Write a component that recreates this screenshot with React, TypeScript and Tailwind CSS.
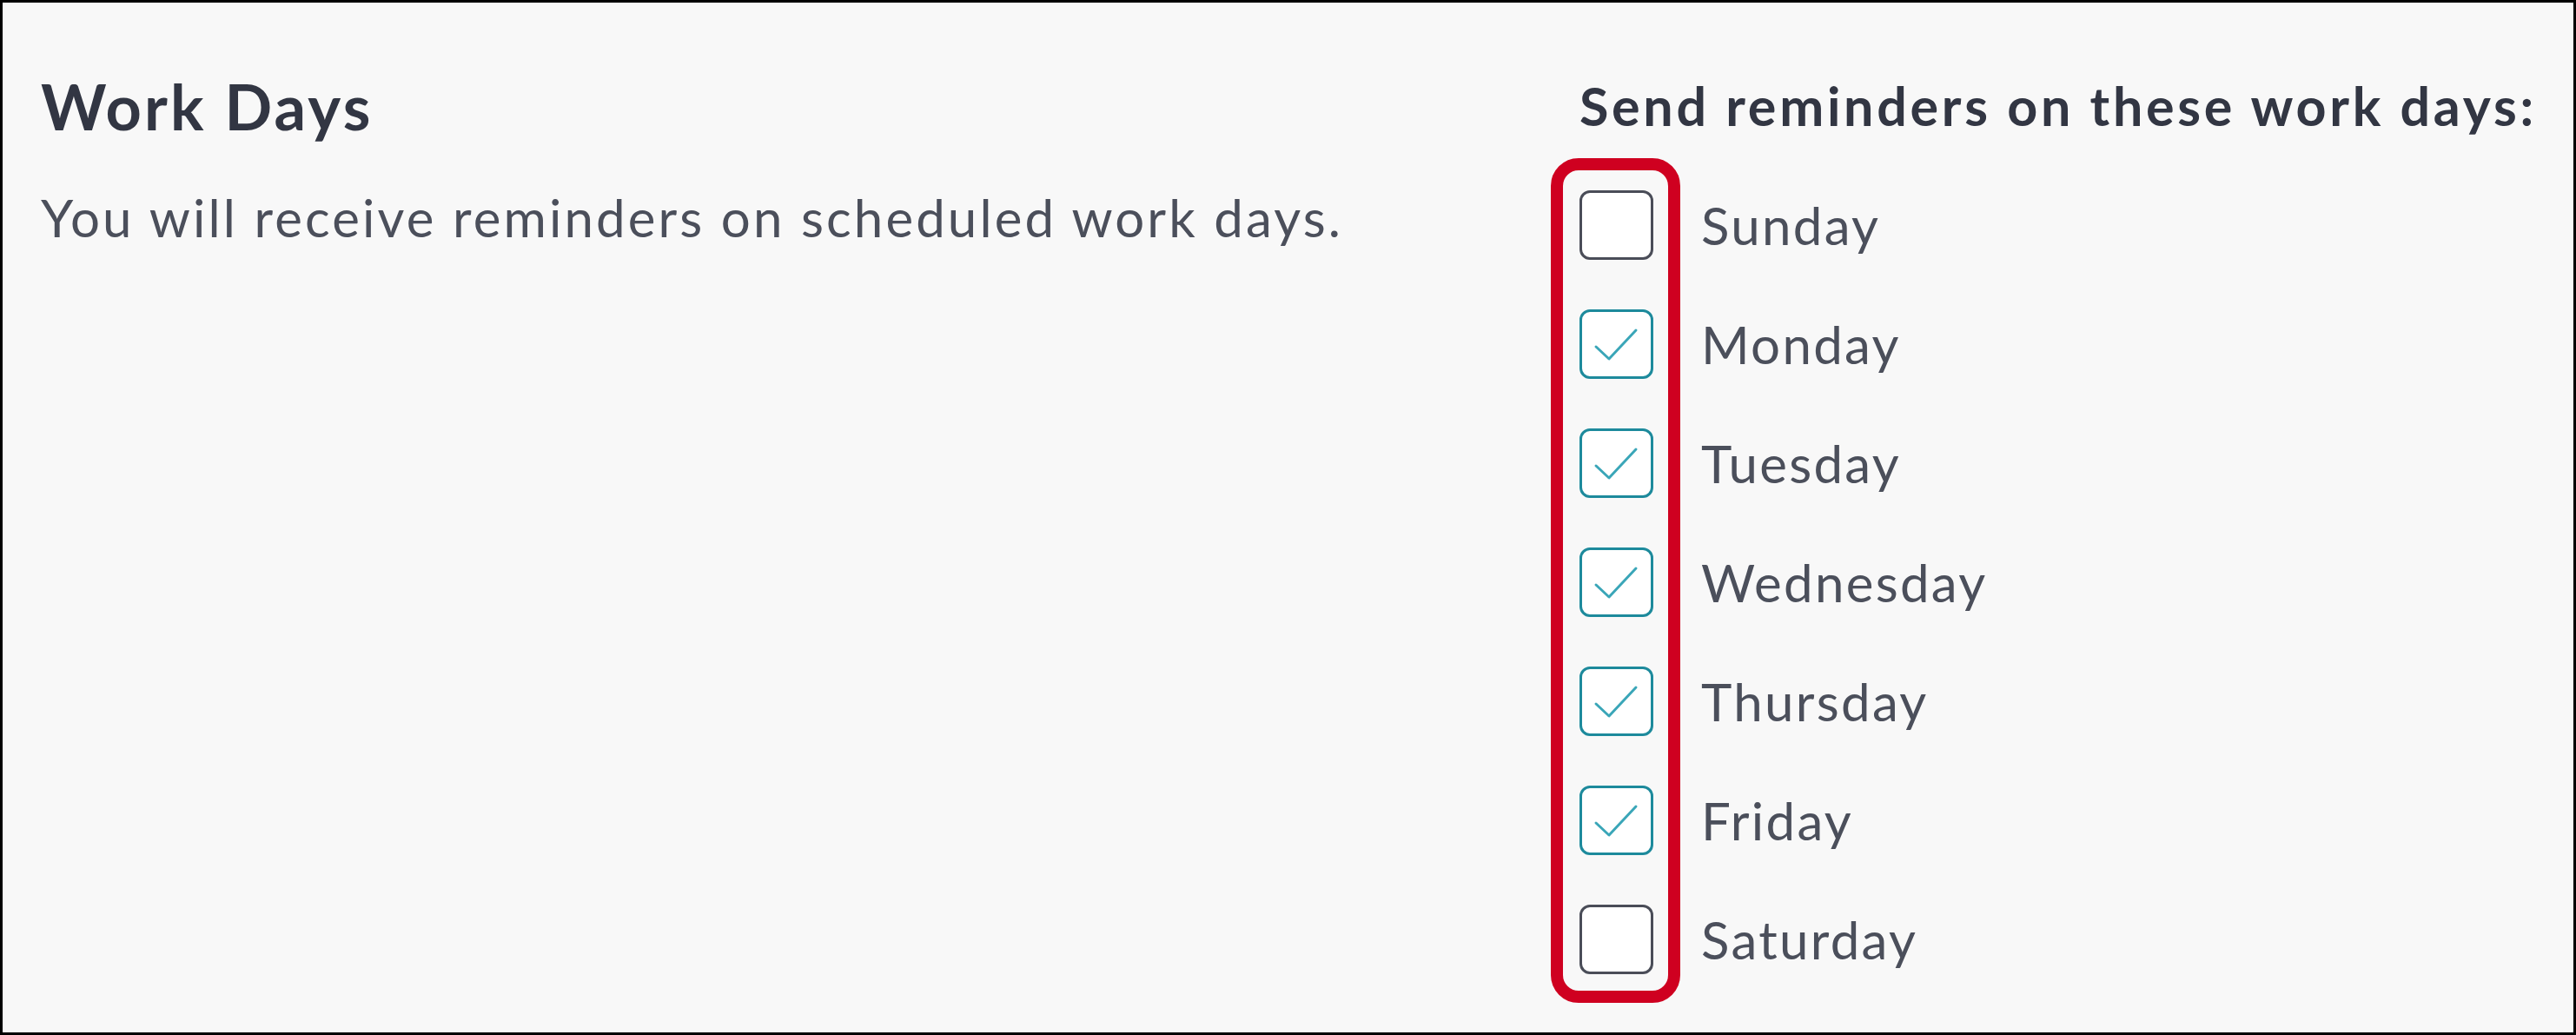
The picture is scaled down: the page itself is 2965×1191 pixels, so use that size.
import React from "react";

const days: { name: string; checked: boolean }[] = [
  { name: "Sunday", checked: false },
  { name: "Monday", checked: true },
  { name: "Tuesday", checked: true },
  { name: "Wednesday", checked: true },
  { name: "Thursday", checked: true },
  { name: "Friday", checked: true },
  { name: "Saturday", checked: false },
];

function Box({ checked }: { checked: boolean }) {
  return (
    <div
      className={
        checked
          ? "relative h-[80px] w-[85px] shrink-0 rounded-[12px] border-[3px] border-[#1d8a9c] bg-white"
          : "relative h-[80px] w-[85px] shrink-0 rounded-[12px] border-[3px] border-[#4a4d58] bg-white"
      }
    >
      {checked && (
        <svg className="absolute inset-0 h-full w-full" viewBox="0 0 79 74" fill="none">
          <path d="M16 40 L31 54 L62 21" stroke="#3aa6b8" strokeWidth="3" strokeLinecap="round" strokeLinejoin="round" />
        </svg>
      )}
    </div>
  );
}

export default function App() {
  return (
    <div
      className="box-border flex h-[1191px] w-[2965px] border-[3px] border-black bg-[#f8f8f8] pl-[44px]"
      style={{ fontFamily: "Lato, 'Open Sans', sans-serif" }}
    >
      <div className="w-[1771px] shrink-0 pt-[83px]">
        <h1 className="text-[72px] font-bold leading-none tracking-[3.2px] text-[#323643]">Work Days</h1>
        <p className="mt-[62px] text-[60px] leading-none tracking-[3.1px] text-[#4b4f5b]">
          You will receive reminders on scheduled work days.
        </p>
      </div>
      <div className="flex-1 pt-[88px]">
        <h2 className="text-[61px] font-bold leading-none tracking-[3.7px] text-[#323643]">Send reminders on these work days:</h2>
        <div className="relative mt-[67px] flex flex-col gap-[57px]">
          <div className="pointer-events-none absolute -left-[33px] -top-[37px] h-[972px] w-[149px] rounded-[32px] border-[14px] border-[#cf0020]" />
          {days.map((d) => (
            <div key={d.name} className="flex h-[80px] items-center gap-[55px]">
              <Box checked={d.checked} />
              <span className="text-[60px] leading-none tracking-[2.3px] text-[#4b4f5b]">{d.name}</span>
            </div>
          ))}
        </div>
      </div>
    </div>
  );
}
